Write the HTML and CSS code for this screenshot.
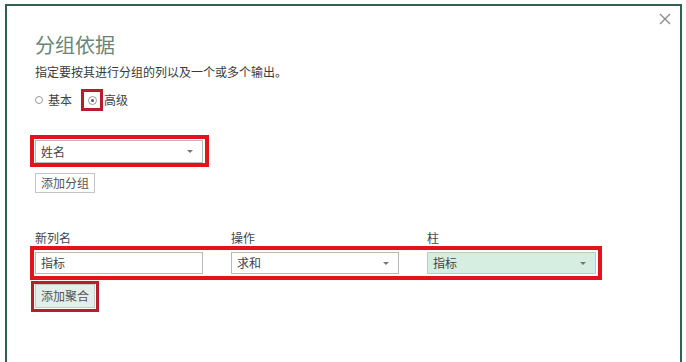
FILE: index.html
```html
<!DOCTYPE html>
<html lang="zh-CN">
<head>
    <meta charset="UTF-8">
    <meta name="viewport" content="width=device-width, initial-scale=1.0">
    <title>分组依据</title>
    <link rel="stylesheet" href="styles.css">
</head>
<body>
    <div class="dialog">
        <span class="close-btn">
            <svg width="12" height="12" viewBox="0 0 12 12">
                <path d="M1 1 L11 11 M11 1 L1 11" stroke="#8a8a8a" stroke-width="1.3" fill="none"/>
            </svg>
        </span>

        <h1 class="dialog-title">分组依据</h1>
        <p class="dialog-desc">指定要按其进行分组的列以及一个或多个输出。</p>

        <div class="radio-row">
            <span class="radio"></span>
            <span class="radio-label">基本</span>
            <span class="mark mark-dark mark-radio">
                <span class="radio radio-checked"></span>
            </span>
            <span class="radio-label">高级</span>
        </div>

        <div class="mark mark-bright mark-group">
            <div class="select">
                <span>姓名</span>
                <span class="caret"></span>
            </div>
        </div>

        <button class="btn">添加分组</button>

        <div class="agg-labels">
            <span>新列名</span>
            <span>操作</span>
            <span>柱</span>
        </div>

        <div class="mark mark-bright mark-agg">
            <div class="agg-row">
                <div class="text-input">指标</div>
                <div class="select">
                    <span>求和</span>
                    <span class="caret"></span>
                </div>
                <div class="select select-active">
                    <span>指标</span>
                    <span class="caret"></span>
                </div>
            </div>
        </div>

        <div class="mark mark-dark mark-btn">
            <button class="btn btn-active">添加聚合</button>
        </div>
    </div>
</body>
</html>
```

FILE: styles.css
```css
* {
    margin: 0;
    padding: 0;
    box-sizing: border-box;
}

body {
    font-family: "Noto Sans CJK SC", "Liberation Sans", sans-serif;
    background: #fff;
    color: #444;
    font-size: 12px;
    overflow: hidden;
    height: 362px;
}

.dialog {
    position: relative;
    margin: 4px 4px 0 5px;
    border: 2px solid #35604f;
    border-bottom: none;
    height: 358px;
    padding: 27px 0 0 28px;
}

.close-btn {
    position: absolute;
    top: 7px;
    right: 9px;
    display: flex;
}

.dialog-title {
    font-size: 20px;
    line-height: 24px;
    font-weight: normal;
    color: #6a8577;
}

.dialog-desc {
    margin-top: 7px;
    line-height: 16px;
    color: #3a3a3a;
}

.radio-row {
    margin-top: 9px;
    height: 22px;
    display: flex;
    align-items: center;
}

.radio {
    width: 8px;
    height: 8px;
    border: 1px solid #9a9a9a;
    border-radius: 50%;
    background: #fff;
    display: inline-flex;
    align-items: center;
    justify-content: center;
}

.radio-checked {
    width: 9px;
    height: 9px;
}

.radio-checked::after {
    content: "";
    width: 3px;
    height: 3px;
    border-radius: 50%;
    background: #555;
}

.radio-label {
    margin-left: 5px;
    line-height: 16px;
}

.mark {
    display: flex;
}

.mark-bright {
    border: 4px solid #e3121c;
}

.mark-dark {
    border: 3px solid #b81d2b;
}

.mark-radio {
    width: 22px;
    height: 22px;
    margin-left: 9px;
    align-items: center;
    justify-content: center;
}

.mark-radio + .radio-label {
    margin-left: 1px;
}

.mark-group {
    margin-top: 24px;
    margin-left: -5px;
    width: 179px;
    padding: 1px 2px 0 1px;
}

.select,
.text-input {
    width: 168px;
    height: 23px;
    border: 1px solid #b9b9b9;
    background: #fff;
    display: flex;
    align-items: center;
    justify-content: space-between;
    padding: 0 9px 0 5px;
    line-height: 16px;
}

.caret {
    width: 0;
    height: 0;
    border-left: 3px solid transparent;
    border-right: 3px solid transparent;
    border-top: 3px solid #777;
}

.select-active {
    background: #d6ede1;
    border-color: #b5cfc2;
}

.btn {
    font-family: inherit;
    font-size: 12px;
    color: #555;
    width: 60px;
    height: 20px;
    border: 1px solid #c4c4c4;
    background: #fff;
    display: block;
    margin-top: 6px;
    line-height: 16px;
}

.btn-active {
    margin-top: 0;
    height: 24px;
    background: #e5efe9;
    border-color: #bfcfc6;
}

.agg-labels {
    margin-top: 37px;
    display: grid;
    grid-template-columns: 168px 168px 169px;
    column-gap: 28px;
    line-height: 16px;
}

.mark-agg {
    margin-left: -5px;
    width: 572px;
    padding: 2px 2px 2px 1px;
}

.agg-row {
    display: grid;
    grid-template-columns: 168px 168px 169px;
    column-gap: 28px;
}

.agg-row .select,
.agg-row .text-input {
    width: auto;
    height: 22px;
}

.mark-btn {
    margin-top: 1px;
    margin-left: -4px;
    width: 68px;
    padding: 0 1px 1px 1px;
}
```
